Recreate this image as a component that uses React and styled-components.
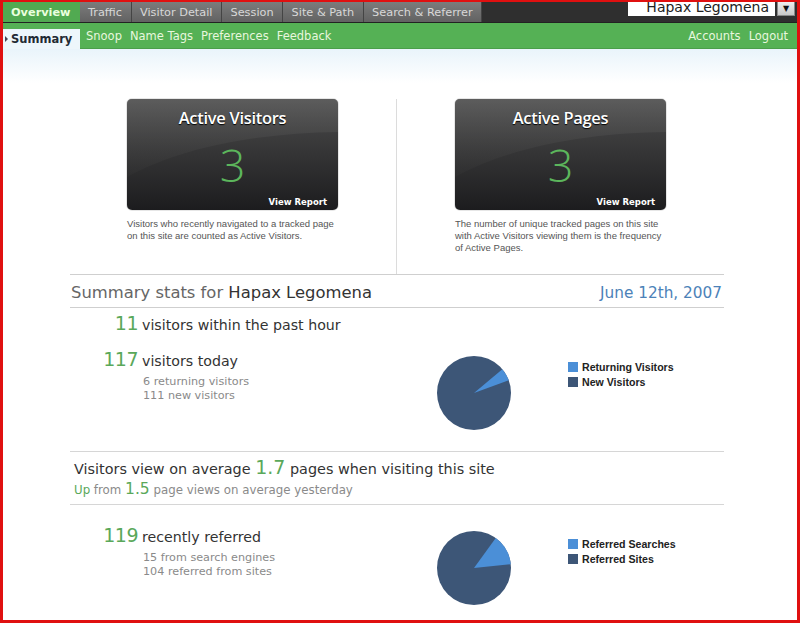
import React from 'react'
import styled, { createGlobalStyle } from 'styled-components'

const GlobalStyle = createGlobalStyle`
  html, body { margin: 0; padding: 0; background: #fff; }
  body { font-family: "DejaVu Sans", Verdana, sans-serif; }
`

const GREEN = '#5aa85a'

const Frame = styled.div`
  width: 800px;
  height: 623px;
  box-sizing: border-box;
  border: 3px solid #e01010;
  border-top-width: 2px;
  overflow: hidden;
  background: #fff;
`

const TabBar = styled.div`
  display: flex;
  height: 20px;
  background: #2f2f2f;
  border-bottom: 1px solid #222;
`

const Tab = styled.div`
  display: flex;
  align-items: center;
  padding: 0 ${p => p.$pad || 8.5}px;
  font-size: 11.3px;
  font-weight: ${p => (p.$active ? 'bold' : 'normal')};
  color: ${p => (p.$active ? '#eaffde' : '#d8d8d8')};
  background: ${p => (p.$active ? '#51aa51' : 'linear-gradient(#7c7c7c, #626262)')};
  border-right: 1px solid ${p => (p.$active ? '#51aa51' : '#444')};
  white-space: nowrap;
`

const SiteSelect = styled.div`
  margin-left: auto;
  margin-top: -2px;
  display: flex;
  height: 16px;
  margin-right: 2px;
`

const SelectValue = styled.div`
  width: 147px;
  background: #fff;
  color: #222;
  font-size: 14px;
  line-height: 14px;
  text-align: right;
  padding-right: 6px;
  box-sizing: border-box;
  overflow: hidden;
`

const SelectButton = styled.div`
  width: 18px;
  margin-left: 2px;
  background: linear-gradient(#f2f2f2, #c8c8c8);
  border: 1px solid #888;
  box-sizing: border-box;
  font-size: 8px;
  color: #111;
  display: flex;
  align-items: center;
  justify-content: center;
`

const SubBar = styled.div`
  display: flex;
  align-items: flex-end;
  height: 25px;
  background: #55b155;
  border-bottom: 1px solid #4a9e4a;
`

const SubTab = styled.div`
  display: flex;
  align-items: center;
  gap: 3px;
  height: 20px;
  width: 77px;
  padding-left: 2px;
  box-sizing: border-box;
  background: #edf6fb;
  font-size: 11.5px;
  font-weight: bold;
  color: #222a33;
  margin-bottom: -1px;
`

const Marker = styled.span`
  width: 0;
  height: 0;
  border-top: 3px solid transparent;
  border-bottom: 3px solid transparent;
  border-left: 3px solid #445;
`

const SubLinks = styled.div`
  display: flex;
  align-items: center;
  height: 24px;
  gap: 8px;
  padding: 0 9px 0 6px;
  flex: 1;
`

const SubLink = styled.span`
  font-size: 11.5px;
  color: #e8f7de;
  margin-left: ${p => (p.$push ? 'auto' : '0')};
`

const Content = styled.div`
  background: linear-gradient(#e9f4fb 0px, #ffffff 34px);
  padding: 50px 0 0 67px;
  height: 100%;
`

const Main = styled.div`
  width: 654px;
`

const Reports = styled.div`
  display: grid;
  grid-template-columns: 327px 327px;
  border-bottom: 1px solid #cfcfcf;
  height: 175px;
`

const ReportCol = styled.div`
  display: flex;
  flex-direction: column;
  align-items: center;
  border-right: ${p => (p.$divider ? '1px solid #dcdcdc' : 'none')};
  padding-right: ${p => (p.$divider ? '1px' : '0')};
`

const Card = styled.div`
  position: relative;
  width: 211px;
  height: 111px;
  border-radius: 5px;
  overflow: hidden;
  background: linear-gradient(#4c4c4c, #1c1c1e);
  box-shadow: 0 0 1px #000;
  display: flex;
  flex-direction: column;
  align-items: center;
  font-family: "Open Sans", "DejaVu Sans", sans-serif;
`

const Swoosh = styled.svg`
  position: absolute;
  inset: 0;
`

const CardTitle = styled.div`
  position: relative;
  margin-top: 7px;
  font-size: 16.5px;
  font-weight: 600;
  color: #fff;
  text-shadow: 0 1px 1px #000;
  letter-spacing: -0.3px;
`

const CardNumber = styled.div`
  position: relative;
  margin-top: 13px;
  font-size: 45px;
  line-height: 46px;
  font-weight: 300;
  color: #5cb65c;
`

const ViewReport = styled.div`
  position: relative;
  align-self: flex-end;
  margin: auto 11px 3px 0;
  font-family: "DejaVu Sans", sans-serif;
  font-size: 8.5px;
  font-weight: bold;
  color: #fff;
`

const CardText = styled.div`
  width: 211px;
  margin-top: 8px;
  font-family: "Liberation Sans", Arial, sans-serif;
  font-size: 9.5px;
  line-height: 12px;
  color: #555;
`

const StatsHeader = styled.div`
  display: flex;
  align-items: baseline;
  justify-content: space-between;
  padding: 8px 2px 5px 1px;
  border-bottom: 1px solid #cfcfcf;
  font-size: 16.4px;
`

const HeaderLabel = styled.span`
  color: #666;
`

const HeaderSite = styled.span`
  color: #333;
`

const HeaderDate = styled.span`
  color: #4c82b8;
  font-size: 15.3px;
`

const StatBlock = styled.div`
  display: grid;
  grid-template-columns: 366px 1fr;
  padding-top: ${p => p.$top || 0}px;
  height: ${p => p.$h}px;
  box-sizing: border-box;
  border-bottom: ${p => (p.$line ? '1px solid #d6d6d6' : 'none')};
`

const StatList = styled.div`
  display: flex;
  flex-direction: column;
  gap: ${p => p.$gap || 0}px;
`

const Stat = styled.div`
  display: grid;
  grid-template-columns: 68px 1fr;
  column-gap: 4px;
  align-items: baseline;
`

const BigNum = styled.span`
  text-align: right;
  font-size: 19px;
  color: ${GREEN};
  letter-spacing: -0.5px;
`

const StatLabel = styled.span`
  font-size: 14.2px;
  color: #333;
`

const SubStats = styled.div`
  grid-column: 2;
  margin-top: 5px;
  font-size: 11.2px;
  line-height: 14px;
  color: #8a8a8a;
  padding-left: 1px;
`

const ChartArea = styled.div`
  display: flex;
  align-items: flex-start;
  padding-top: ${p => p.$top || 0}px;
`

const Pie = styled.svg`
  width: 76px;
  height: 76px;
  flex: none;
`

const Legend = styled.div`
  margin-left: 56px;
  margin-top: ${p => p.$top || 0}px;
  display: flex;
  flex-direction: column;
  gap: 3px;
`

const LegendItem = styled.div`
  display: flex;
  align-items: center;
  gap: 4px;
  font-family: "Liberation Sans", Arial, sans-serif;
  font-size: 10.6px;
  font-weight: bold;
  color: #222;
`

const Swatch = styled.span`
  width: 10px;
  height: 10px;
  background: ${p => p.$color};
`

const AverageBlock = styled.div`
  padding: 4px 4px 0 4px;
  height: 53px;
  box-sizing: border-box;
  border-bottom: 1px solid #d6d6d6;
`

const AvgLine = styled.div`
  font-size: 14.4px;
  line-height: 22px;
  color: #333;
`

const AvgNum = styled.span`
  font-size: 19px;
  color: ${GREEN};
`

const AvgSub = styled.div`
  font-size: 11.8px;
  line-height: 18px;
  color: #8a8a8a;
`

const UpWord = styled.span`
  color: ${GREEN};
`

const SmallNum = styled.span`
  font-size: 15.5px;
  color: ${GREEN};
`

const LIGHT = '#4b8fd7'
const DARK = '#3d5677'

function PieChart({ from, to }) {
  const r = 37
  const c = 38
  const pt = a => [c + r * Math.cos((a * Math.PI) / 180), c - r * Math.sin((a * Math.PI) / 180)]
  const [x1, y1] = pt(from)
  const [x2, y2] = pt(to)
  return (
    <Pie viewBox="0 0 76 76">
      <circle cx={c} cy={c} r={r} fill={DARK} />
      <path d={`M${c} ${c} L${x1} ${y1} A${r} ${r} 0 0 0 ${x2} ${y2} Z`} fill={LIGHT} />
    </Pie>
  )
}

function ReportCard({ title, value, text }) {
  return (
    <>
      <Card>
        <Swoosh viewBox="0 0 211 111" preserveAspectRatio="none">
          <defs>
            <linearGradient id="sw" x1="0" y1="0" x2="0" y2="1">
              <stop offset="0" stopColor="#6a6a6a" stopOpacity="0.55" />
              <stop offset="1" stopColor="#3a3a3a" stopOpacity="0.2" />
            </linearGradient>
          </defs>
          <path d="M0 0 H211 V33 C140 34 60 45 0 78 Z" fill="url(#sw)" />
        </Swoosh>
        <CardTitle>{title}</CardTitle>
        <CardNumber>{value}</CardNumber>
        <ViewReport>View Report</ViewReport>
      </Card>
      <CardText>{text}</CardText>
    </>
  )
}

export default function App() {
  return (
    <>
      <GlobalStyle />
      <Frame>
        <TabBar>
          <Tab $active $pad={8}>Overview</Tab>
          <Tab>Traffic</Tab>
          <Tab>Visitor Detail</Tab>
          <Tab>Session</Tab>
          <Tab>Site &amp; Path</Tab>
          <Tab>Search &amp; Referrer</Tab>
          <SiteSelect>
            <SelectValue>Hapax Legomena</SelectValue>
            <SelectButton>▼</SelectButton>
          </SiteSelect>
        </TabBar>
        <SubBar>
          <SubTab>
            <Marker />
            Summary
          </SubTab>
          <SubLinks>
            <SubLink>Snoop</SubLink>
            <SubLink>Name Tags</SubLink>
            <SubLink>Preferences</SubLink>
            <SubLink>Feedback</SubLink>
            <SubLink $push>Accounts</SubLink>
            <SubLink>Logout</SubLink>
          </SubLinks>
        </SubBar>
        <Content>
          <Main>
            <Reports>
              <ReportCol $divider>
                <ReportCard
                  title="Active Visitors"
                  value="3"
                  text="Visitors who recently navigated to a tracked page on this site are counted as Active Visitors."
                />
              </ReportCol>
              <ReportCol>
                <ReportCard
                  title="Active Pages"
                  value="3"
                  text="The number of unique tracked pages on this site with Active Visitors viewing them is the frequency of Active Pages."
                />
              </ReportCol>
            </Reports>

            <StatsHeader>
              <span>
                <HeaderLabel>Summary stats for </HeaderLabel>
                <HeaderSite>Hapax Legomena</HeaderSite>
              </span>
              <HeaderDate>June 12th, 2007</HeaderDate>
            </StatsHeader>

            <StatBlock $h={144} $top={4} $line>
              <StatList $gap={14}>
                <Stat>
                  <BigNum>11</BigNum>
                  <StatLabel>visitors within the past hour</StatLabel>
                </Stat>
                <Stat>
                  <BigNum>117</BigNum>
                  <StatLabel>visitors today</StatLabel>
                  <SubStats>
                    6 returning visitors
                    <br />
                    111 new visitors
                  </SubStats>
                </Stat>
              </StatList>
              <ChartArea $top={43}>
                <PieChart from={20} to={40} />
                <Legend $top={6}>
                  <LegendItem>
                    <Swatch $color={LIGHT} />
                    Returning Visitors
                  </LegendItem>
                  <LegendItem>
                    <Swatch $color={DARK} />
                    New Visitors
                  </LegendItem>
                </Legend>
              </ChartArea>
            </StatBlock>

            <AverageBlock>
              <AvgLine>
                Visitors view on average <AvgNum>1.7</AvgNum> pages when visiting this site
              </AvgLine>
              <AvgSub>
                <UpWord>Up</UpWord> from <SmallNum>1.5</SmallNum> page views on average yesterday
              </AvgSub>
            </AverageBlock>

            <StatBlock $h={110} $top={19}>
              <StatList>
                <Stat>
                  <BigNum>119</BigNum>
                  <StatLabel>recently referred</StatLabel>
                  <SubStats>
                    15 from search engines
                    <br />
                    104 referred from sites
                  </SubStats>
                </Stat>
              </StatList>
              <ChartArea $top={6}>
                <PieChart from={6} to={54} />
                <Legend $top={8}>
                  <LegendItem>
                    <Swatch $color={LIGHT} />
                    Referred Searches
                  </LegendItem>
                  <LegendItem>
                    <Swatch $color={DARK} />
                    Referred Sites
                  </LegendItem>
                </Legend>
              </ChartArea>
            </StatBlock>
          </Main>
        </Content>
      </Frame>
    </>
  )
}
